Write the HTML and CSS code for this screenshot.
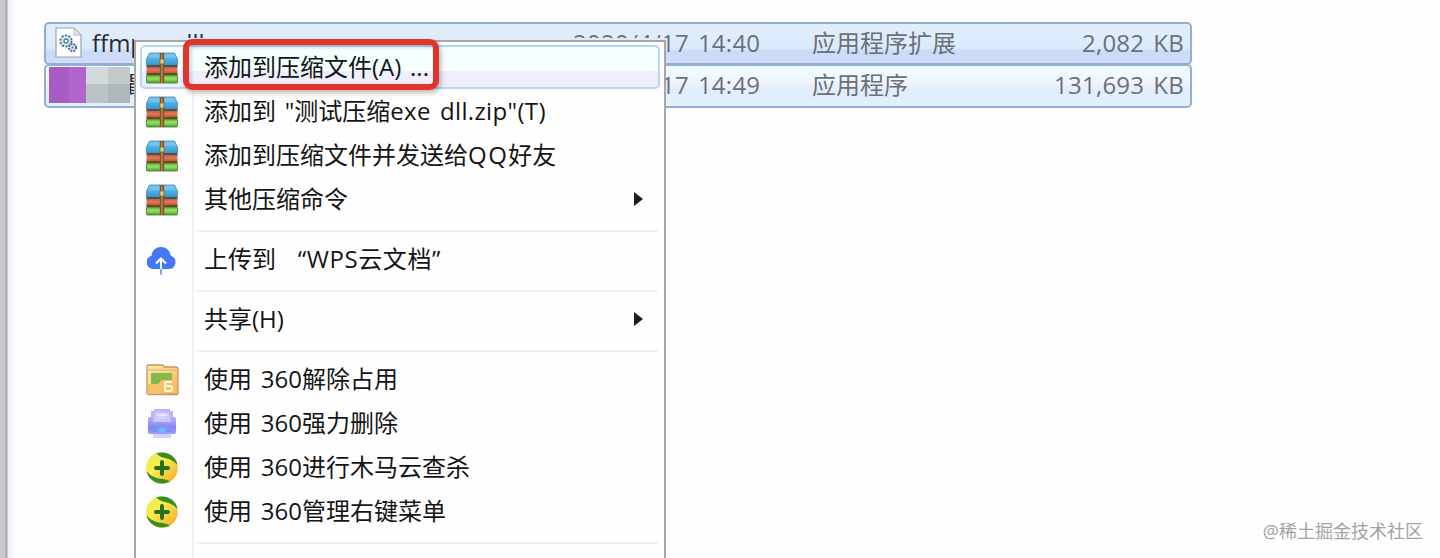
FILE: index.html
```
<!DOCTYPE html>
<html lang="zh-CN">
  <head>
    <meta charset="utf-8">
    <title>右键菜单</title>
    <link rel="stylesheet" href="styles.css">
  </head>
  <body>
    <!-- shared icons -->
    <svg class="defs" width="0" height="0">
      <defs>
        <linearGradient id="blue" x1="0" y1="0" x2="0" y2="1">
          <stop offset="0" stop-color="#6dbfe8"/>
          <stop offset=".5" stop-color="#4fb0e4"/>
          <stop offset="1" stop-color="#3b96cc"/>
        </linearGradient>
        <linearGradient id="red" x1="0" y1="0" x2="0" y2="1">
          <stop offset="0" stop-color="#cf5a34"/>
          <stop offset=".4" stop-color="#e07a58"/>
          <stop offset="1" stop-color="#b34c30"/>
        </linearGradient>
        <linearGradient id="green" x1="0" y1="0" x2="0" y2="1">
          <stop offset="0" stop-color="#5fae32"/>
          <stop offset=".45" stop-color="#9be065"/>
          <stop offset="1" stop-color="#4f9c38"/>
        </linearGradient>
        <linearGradient id="folder" x1="0" y1="0" x2="1" y2="1">
          <stop offset="0" stop-color="#fde6ac"/>
          <stop offset=".5" stop-color="#f9d68c"/>
          <stop offset="1" stop-color="#efa04d"/>
        </linearGradient>
        <linearGradient id="purple" x1="0" y1="0" x2="0" y2="1">
          <stop offset="0" stop-color="#b9b0fa"/>
          <stop offset=".6" stop-color="#8d85f0"/>
          <stop offset="1" stop-color="#9aa0f8"/>
        </linearGradient>
        <linearGradient id="ball" x1="0" y1="0" x2="1" y2="1">
          <stop offset="0" stop-color="#e4ea5a"/>
          <stop offset=".4" stop-color="#fbee4c"/>
          <stop offset="1" stop-color="#f2a52c"/>
        </linearGradient>
        <symbol id="zip" viewBox="0 0 34 34">
          <path d="M4.500 2h25L32.500 8v6h-31V8z" fill="url(#blue)" stroke="#4488b0" stroke-width=".8"/>
          <path d="M5 3h24l2 4H3z" fill="#8bd0f0" opacity=".5"/>
          <rect x="1.500" y="14" width="31" height="2" fill="#43545c"/>
          <rect x="1.500" y="16" width="31" height="7" fill="url(#red)"/>
          <rect x="1.500" y="22.500" width="31" height="1.500" fill="#563522"/>
          <rect x="1.500" y="24" width="31" height="8" rx="1" fill="url(#green)" stroke="#397f28" stroke-width=".8"/>
          <rect x="14.800" y="2" width="4.400" height="30" fill="#80532c"/>
          <rect x="16.200" y="3" width="1.400" height="29" fill="#b98a50"/>
          <rect x="15" y="8" width="4" height="5" rx="1" fill="#e9ca80" stroke="#8a6630" stroke-width=".8"/>
        </symbol>
        <symbol id="shield" viewBox="0 0 34 34">
          <circle cx="17" cy="17" r="15.800" fill="url(#ball)"/>
          <path d="M11 2.500C20-1 31 4 32.500 14C28 9 23 7.500 18 6.500C15 5.500 13 4 11 2.500z" fill="#3b8c28"/>
          <path d="M1.500 20C6 26 12 27.500 18 28C21 28.500 23 29.500 25 30.500C14 36 3 29 1.500 20z" fill="#3b8c28"/>
          <path d="M17 11v12M11 17h12" stroke="#28701f" stroke-width="4" stroke-linecap="round"/>
        </symbol>
      </defs>
    </svg>

    <div class="window">
      <div class="edge"></div>
      <div class="files">
        <div class="file">
          <svg class="file-icon" viewBox="0 0 28 32">
            <path d="M1 1h18l7 7v22H1z" fill="#fdfdfd" stroke="#a0a4a7" stroke-width="1.200"/>
            <path d="M19 1v7h7z" fill="#e2e5e7" stroke="#b2b5b8"/>
            <circle cx="11" cy="14" r="5.600" fill="#dceaf2" stroke="#587a98" stroke-width="2" stroke-dasharray="2.300 1.200"/>
            <circle cx="11" cy="14" r="2" fill="#fff" stroke="#3d8098" stroke-width="1.300"/>
            <circle cx="17.500" cy="20.500" r="3.600" fill="#d5e6f2" stroke="#4b6c98" stroke-width="2" stroke-dasharray="1.900 1"/>
            <circle cx="17.500" cy="20.500" r="1" fill="#47799a"/>
          </svg>
          <span class="name">ffmpeg.dll</span>
          <span class="date">2020/4/17 14:40</span>
          <span class="type">应用程序扩展</span>
          <span class="size">2,082 KB</span>
        </div>
        <div class="file light">
          <div class="mosaic">
            <i class="m1"></i><i class="m2"></i><i class="m3"></i><i class="m4"></i><i class="m5"></i>
          </div>
          <span class="name second">最</span>
          <span class="date">2020/4/17 14:49</span>
          <span class="type">应用程序</span>
          <span class="size">131,693 KB</span>
        </div>
      </div>
    </div>

    <div class="menu">
      <div class="item active"><svg class="icon"><use href="#zip"/></svg><span class="label">添加到压缩文件(A) ...</span><div class="marker"></div></div>
      <div class="item"><svg class="icon"><use href="#zip"/></svg><span class="label">添加到 "测试压缩<span class="latin">exe dll.zip"(T)</span></span></div>
      <div class="item"><svg class="icon"><use href="#zip"/></svg><span class="label">添加到压缩文件并发送给<span class="qq">QQ</span>好友</span></div>
      <div class="item"><svg class="icon"><use href="#zip"/></svg><span class="label">其他压缩命令</span><div class="arrow"></div></div>
      <div class="line"></div>
      <div class="item">
        <svg class="icon" viewBox="0 0 34 34">
          <path d="M7.500 26a6.800 6.800 0 0 1-1-13.200C7 7 11.500 4 16 4s9 3 9.800 8.800A6.800 6.800 0 0 1 24.500 26z" fill="#4479f3"/>
          <path d="M16 27V16M11 20.500l5-5 5 5" fill="none" stroke="#fff" stroke-width="2"/>
          <path d="M16 26v5.500" stroke="#6a9af5" stroke-width="1.800"/>
        </svg>
        <span class="label">上传到 <span class="quoted">“WPS云文档”</span></span>
      </div>
      <div class="line"></div>
      <div class="item"><span class="icon"></span><span class="label">共享(H)</span><div class="arrow"></div></div>
      <div class="line"></div>
      <div class="item">
        <svg class="icon" viewBox="0 0 34 34">
          <path d="M2 30V4q0-2 2-2h13q2 0 2 2h12q2 0 2 2v24q0 1.500-1.500 1.500h-28Q2 31.500 2 30z" fill="url(#folder)" stroke="#c9985c" stroke-width="1.300"/>
          <path d="M3 7h29" stroke="#dbaf70"/>
          <path d="M6 10h21v7H17l-3 4H6z" fill="#86b84a"/>
          <path d="M3 21h10l4-4h15v13H3z" fill="#f8c068"/>
          <path d="M27 19h-5q-2 0-2 2v5q0 2 2 2h3q2 0 2-2v-1q0-2-2-2h-5" fill="none" stroke="#fff4d5" stroke-width="2.200"/>
        </svg>
        <span class="label">使用 360解除占用</span>
      </div>
      <div class="item">
        <svg class="icon" viewBox="0 0 34 34">
          <path d="M9 2h16v2h3v8H6V4h3z" fill="#b9b5fb"/>
          <rect x="3" y="10" width="28" height="17" rx="2" fill="url(#purple)"/>
          <path d="M10 5h14l2 10H8z" fill="#c9c5fd"/>
          <path d="M12 7h10v2H12zM13 11h8" fill="#ece9ff" stroke="#e0dcff"/>
          <path d="M8 18h18l3 7H5z" fill="#8090f5"/>
          <ellipse cx="17" cy="23" rx="4" ry="2.500" fill="#68bafa"/>
          <path d="M8 27h18v4H8z" fill="#d6d1fc"/>
        </svg>
        <span class="label">使用 360强力删除</span>
      </div>
      <div class="item"><svg class="icon"><use href="#shield"/></svg><span class="label">使用 360进行木马云查杀</span></div>
      <div class="item"><svg class="icon"><use href="#shield"/></svg><span class="label">使用 360管理右键菜单</span></div>
      <div class="line"></div>
    </div>

    <div class="watermark">@稀土掘金技术社区</div>
  </body>
</html>
```
FILE: styles.css
```
body {
  margin: 0;
  height: 558px;
  overflow: hidden;
  position: relative;
  background: #fefefe;
  color: #151515;
  font: 24px/44px "Open Sans", "Noto Sans CJK SC", sans-serif;
  word-spacing: 2.5px;
  white-space: nowrap;
}
.defs {
  position: absolute;
}
.window {
  display: flex;
  height: 558px;
}
.edge {
  width: 14px;
  margin-right: 30px;
  background: linear-gradient(90deg, #c9c9cd 0 5px, #a9aaae 6px 7px, #eef0f3 8px, #f0f7fa 11px, #fefefe 14px);
}
.files {
  width: 1148px;
  padding-top: 22px;
}
.file {
  display: grid;
  grid-template-columns: 46px 481px 239px 190px 1fr;
  align-items: center;
  box-sizing: border-box;
  height: 43px;
  padding: 0 6px 2px 0;
  border: 2px solid #91aed5;
  border-radius: 5px;
  background: linear-gradient(#e2edfa, #d9ebfd 62%, #c9dafa 70%, #d1dcfa);
  color: #6c7078;
  line-height: 36px;
}
.light {
  margin-top: -1px;
  height: 44px;
  background: linear-gradient(#f0fdff, #f0f4fd 40%, #e0edfc 60%, #e2effc);
}
.file-icon {
  width: 28px;
  height: 32px;
  margin-left: 9px;
}
.name {
  color: #292c33;
}
.date,
.size {
  letter-spacing: 0.25px;
}
.size {
  text-align: right;
}
.mosaic {
  display: grid;
  grid-template-columns: 20px 17px 22px 22px;
  grid-template-rows: 17px 19px;
  width: 81px;
  margin-left: 3px;
  z-index: 1;
}
.m1 {
  grid-row: span 2;
  background: #a75cc4;
}
.m2 {
  grid-row: span 2;
  background: #b064cc;
}
.m3 {
  background: #d4d9dc;
}
.m4 {
  background: #c3c8cb;
}
.m5 {
  grid-column: 3 / 5;
  background: linear-gradient(90deg, #bbc3c8 50%, #afb7bc 50%);
}
.second {
  padding-left: 34px;
}

.menu {
  position: absolute;
  left: 134px;
  top: 40px;
  box-sizing: border-box;
  width: 532px;
  height: 540px;
  padding: 3px 4px;
  border: 2px solid #a7a7a9;
  background: linear-gradient(90deg, #fdfdfd 56px, #f1f1f1 56px 58px, #fefefe 58px);
  box-shadow: 0 -2px #dcebfc;
}
.item {
  display: flex;
  align-items: center;
  position: relative;
  height: 44px;
}
.active {
  border-radius: 5px;
  background: linear-gradient(#f5ffff 58%, #efeefc 60%);
  box-shadow: inset 0 0 0 2px #bad5f2;
}
.icon {
  width: 34px;
  height: 34px;
  margin: 1px 26px 0 5px;
}
.label {
  margin-left: -1px;
}
.latin {
  letter-spacing: 0.35px;
}
.qq {
  letter-spacing: 1.5px;
}
.arrow {
  margin: 0 17px 0 auto;
  border: 7px solid transparent;
  border-left: 9px solid #1c1c1c;
  border-right: 0;
}
.line {
  height: 2px;
  margin: 9px 2px 5px 56px;
  background: #f1f1f1;
}
.quoted {
  margin-left: 13px;
  letter-spacing: 0.6px;
}
/* red frame over the first command */
.marker {
  position: absolute;
  left: 43px;
  top: -6px;
  box-sizing: border-box;
  width: 256px;
  height: 51px;
  border: 6px solid #e0352b;
  border-radius: 9px;
  box-shadow: 2px 3px 5px #0004, inset 2px 2px 4px #0003;
}

.watermark {
  position: absolute;
  right: 17px;
  bottom: 15px;
  font-size: 18px;
  line-height: 24px;
  color: #a2a2a2;
}
```
